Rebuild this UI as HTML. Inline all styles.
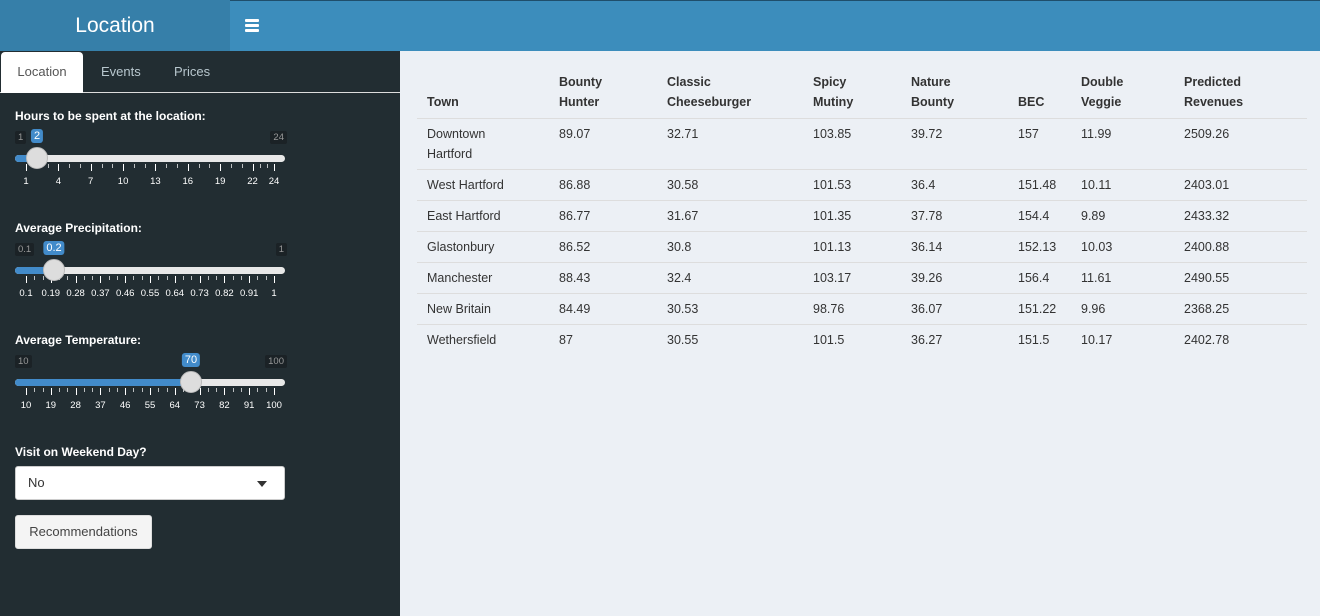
<!DOCTYPE html>
<html><head><style>
*{margin:0;padding:0;box-sizing:border-box}
body{width:1320px;height:616px;overflow:hidden;font-family:"Liberation Sans",sans-serif;background:#ecf0f5;position:relative}
.abs{position:absolute}
#top{left:0;top:0;width:1320px;height:51px;background:#3c8dbc;border-top:1px solid #1f4e6b}
#logo{left:0;top:0;width:230px;height:51px;background:#367fa9;color:#fff;font-size:21px;text-align:center;line-height:52px}
#side{left:0;top:51px;width:400px;height:565px;background:#222d32}
.tab{top:52px;height:40px;line-height:40px;font-size:13px;color:#b8c7ce}
.lbl{color:#fff;font-weight:bold;font-size:12px}
.tk{font-size:9.5px;color:#fff;transform:translateX(-50%)}
.mm{font-size:9.5px;color:#999;background:#1b2226;padding:1px 3px;border-radius:2px}
.val{font-size:11px;color:#fff;background:#428bca;padding:1px 3px;border-radius:3px;transform:translateX(-50%)}
.track{height:7px;background:#e8e8e8;border-radius:4px;left:15px;width:270px}
.bar{height:7px;background:#428bca;border-radius:4px 0 0 4px;left:15px}
.hd{width:22px;height:22px;border-radius:50%;background:#ddd;border:1px solid #bbb;transform:translateX(-50%)}
.tl{width:1px;background:#fff}
table{position:absolute;left:417px;top:72px;border-collapse:collapse;font-size:12.5px;color:#333;width:890px}
th{text-align:left;font-weight:bold;vertical-align:bottom;padding:0 10px 6px 10px;line-height:20px;border-bottom:1px solid #ddd}
td{vertical-align:top;padding:5px 10px 5px 10px;line-height:20px;border-top:1px solid #fff}
tr+tr td{border-top:1px solid #ddd}
</style></head><body>
<div id="top" class="abs"></div>
<div id="logo" class="abs">Location</div>
<div class="abs" style="left:245px;top:19px;width:14px">
<div style="height:2.5px;background:#fff;margin-bottom:2.5px;border-radius:1px"></div><div style="height:2.5px;background:#fff;margin-bottom:2.5px;border-radius:1px"></div><div style="height:2.5px;background:#fff;border-radius:1px"></div></div>
<div id="side" class="abs"></div>
<div class="abs" style="left:0;top:92px;width:400px;height:1px;background:#ddd"></div>
<div class="abs tab" style="left:1px;width:82px;background:#fff;color:#555;text-align:center;border-radius:4px 4px 0 0;height:41px">Location</div>
<div class="abs tab" style="left:101px">Events</div>
<div class="abs tab" style="left:174px">Prices</div>
<div id="sl"></div>
<div class="abs lbl" style="left:15px;top:445px">Visit on Weekend Day?</div>
<div class="abs" style="left:15px;top:466px;width:270px;height:34px;background:#fff;border:1px solid #ccc;border-radius:3px;font-size:13px;line-height:32px;padding-left:12px;color:#333">No<span class="abs" style="right:17px;top:14px;border-left:5px solid transparent;border-right:5px solid transparent;border-top:6px solid #333"></span></div>
<div class="abs" style="left:15px;top:515px;width:137px;height:34px;background:#f4f4f4;border:1px solid #ddd;border-radius:3px;font-size:13px;line-height:32px;text-align:center;color:#444">Recommendations</div>
<table>
<tr><th style="width:132px;">Town</th><th style="width:108px">Bounty<br>Hunter</th><th style="width:146px">Classic<br>Cheeseburger</th><th style="width:98px">Spicy<br>Mutiny</th><th style="width:107px">Nature<br>Bounty</th><th style="width:63px">BEC</th><th style="width:103px">Double<br>Veggie</th><th>Predicted<br>Revenues</th></tr>
<tr><td>Downtown<br>Hartford</td><td>89.07</td><td>32.71</td><td>103.85</td><td>39.72</td><td>157</td><td>11.99</td><td>2509.26</td></tr>
<tr><td>West Hartford</td><td>86.88</td><td>30.58</td><td>101.53</td><td>36.4</td><td>151.48</td><td>10.11</td><td>2403.01</td></tr>
<tr><td>East Hartford</td><td>86.77</td><td>31.67</td><td>101.35</td><td>37.78</td><td>154.4</td><td>9.89</td><td>2433.32</td></tr>
<tr><td>Glastonbury</td><td>86.52</td><td>30.8</td><td>101.13</td><td>36.14</td><td>152.13</td><td>10.03</td><td>2400.88</td></tr>
<tr><td>Manchester</td><td>88.43</td><td>32.4</td><td>103.17</td><td>39.26</td><td>156.4</td><td>11.61</td><td>2490.55</td></tr>
<tr><td>New Britain</td><td>84.49</td><td>30.53</td><td>98.76</td><td>36.07</td><td>151.22</td><td>9.96</td><td>2368.25</td></tr>
<tr><td style="border-bottom:none">Wethersfield</td><td>87</td><td>30.55</td><td>101.5</td><td>36.27</td><td>151.5</td><td>10.17</td><td>2402.78</td></tr>
</table>
<script>
var S=[
{y:109,label:"Hours to be spent at the location:",min:"1",max:"24",val:"2",hx:37,labels:["1","4","7","10","13","16","19","22","24"],pos:[26,58.4,90.7,123.1,155.4,187.8,220.2,252.5,274],minor:[]},
{y:221,label:"Average Precipitation:",min:"0.1",max:"1",val:"0.2",hx:54,labels:["0.1","0.19","0.28","0.37","0.46","0.55","0.64","0.73","0.82","0.91","1"]},
{y:333,label:"Average Temperature:",min:"10",max:"100",val:"70",hx:191,labels:["10","19","28","37","46","55","64","73","82","91","100"]}];
var h="";
S.forEach(function(s){
 var y=s.y;
 h+='<div class="abs lbl" style="left:15px;top:'+y+'px">'+s.label+'</div>';
 h+='<div class="abs mm" style="left:15px;top:'+(y+22)+'px">'+s.min+'</div>';
 h+='<div class="abs mm" style="right:'+(1320-287)+'px;top:'+(y+22)+'px">'+s.max+'</div>';
 h+='<div class="abs val" style="left:'+s.hx+'px;top:'+(y+20)+'px">'+s.val+'</div>';
 h+='<div class="abs track" style="top:'+(y+46)+'px"></div>';
 h+='<div class="abs bar" style="top:'+(y+46)+'px;width:'+(s.hx-15)+'px"></div>';
 var pos=s.pos||s.labels.map(function(_,i){return 26+i*248/(s.labels.length-1)});
 for(var i=0;i<pos.length;i++){
  h+='<div class="abs tl" style="left:'+pos[i]+'px;top:'+(y+55)+'px;height:7px"></div>';
  h+='<div class="abs tk" style="left:'+pos[i]+'px;top:'+(y+67)+'px">'+s.labels[i]+'</div>';
  if(i<pos.length-1){var st=(pos[i+1]-pos[i])/3;for(var k=1;k<3;k++)h+='<div class="abs tl" style="left:'+(pos[i]+st*k)+'px;top:'+(y+55)+'px;height:4px;opacity:.7"></div>';}
 }
 h+='<div class="abs hd" style="left:'+s.hx+'px;top:'+(y+38)+'px"></div>';
});
document.getElementById("sl").innerHTML=h;
</script>
</body></html>
